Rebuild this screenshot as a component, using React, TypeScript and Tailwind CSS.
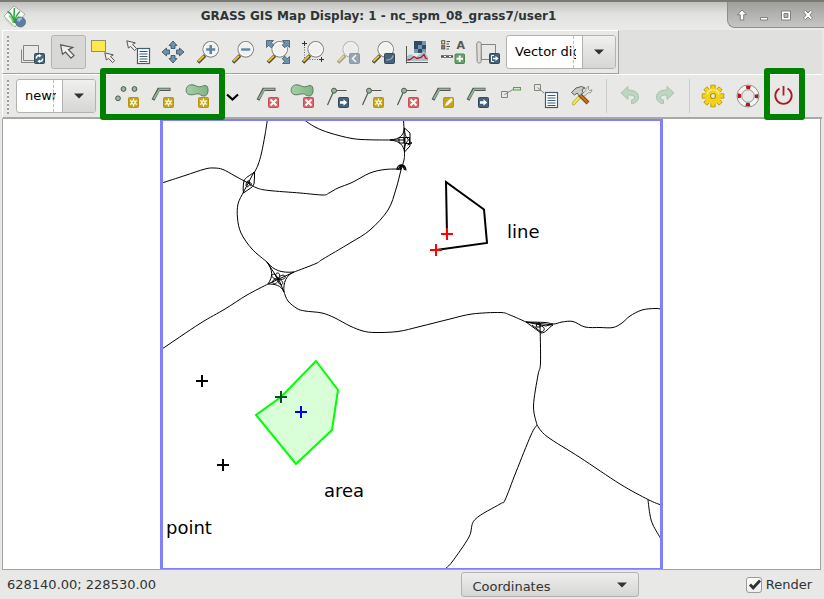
import type { ReactNode } from "react";

type Point = [number, number];

const DARK = "#555753";
const BLUE = "#3e5c72";
const GREEN = "#8fbc94";

/* ---------- icon building blocks ---------- */

function Icon({ children, className = "" }: { children: ReactNode; className?: string }) {
  return (
    <svg viewBox="0 0 24 24" className={`block size-6 shrink-0 overflow-visible ${className}`} fill="none" aria-hidden="true">
      {children}
    </svg>
  );
}

function Badge({ color, edge, children }: { color: string; edge: string; children?: ReactNode }) {
  return (
    <g>
      <rect x="13.5" y="13.5" width="10" height="10" rx="1" fill={color} stroke={edge} />
      {children}
    </g>
  );
}

const NewBadge = () => (
  <Badge color="#c8a414" edge="#ba9506">
    <path d="M18.5 14.5v8M15 16.5l7 4M22 16.5l-7 4" stroke="#fff" strokeWidth="1.3" />
    <circle cx="18.5" cy="18.5" r="2.2" fill="#fff" />
    <circle cx="18.5" cy="18.5" r="1" fill="#c8a414" />
  </Badge>
);

const DeleteBadge = () => (
  <Badge color="#dc6468" edge="#cf4a50">
    <path d="M15.5 15.5l6 6M21.5 15.5l-6 6" stroke="#fff" strokeWidth="2" />
  </Badge>
);

const MoveBadge = () => (
  <Badge color="#45637a" edge="#33495a">
    <path d="M15 17.2h3.5v-2l3.7 3.3-3.7 3.3v-2H15z" fill="#fff" />
  </Badge>
);

const EditBadge = () => (
  <Badge color="#c8a414" edge="#ba9506">
    <path d="M15 22l1-3 5-5 2 2-5 5z" fill="#fff" />
  </Badge>
);

const Handle = () => (
  <g>
    <path d="M2 22.5L9 15.5" stroke="#4d4a3c" strokeWidth="3.6" />
    <path d="M2.4 21.4L8 15.9" stroke="#f0c332" strokeWidth="1.8" />
  </g>
);

function Lens({ cx = 14.7, cy = 9.3, r = 7.8 }: { cx?: number; cy?: number; r?: number }) {
  return (
    <g>
      <Handle />
      <circle cx={cx} cy={cy} r={r} fill="#f1f1ef" stroke="#84847f" strokeWidth="1.1" />
      <circle cx={cx} cy={cy} r={r - 1.2} stroke="#fff" />
    </g>
  );
}

const PolyLine = () => (
  <g strokeLinejoin="miter">
    <path d="M3 16L8.7 5.3H20.5" stroke={DARK} strokeWidth="3.2" />
    <path d="M3.600 15L9.300 5.300H19.700" stroke={GREEN} strokeWidth="1.500" />
  </g>
);

const Blob = () => (
  <path
    d="M1.200 6.800C1 3 3.200.8 7 .8c3.200 0 4.500 2 7.500 2 2.500 0 3.500-1.300 5.500-1.300 2.500 0 3.200 2.200 3 5.500-.2 3-1.500 5-4.200 5-3 0-3.300-2.200-6-2.200-2.500 0-4 1.200-7 1-2.800-.2-4.400-1.500-4.600-4z"
    fill="url(#blobFill)"
    stroke="#5f7a62"
  />
);

const Vertex = () => (
  <g>
    <path d="M21.500 6.500H9L2.500 21" stroke={DARK} strokeWidth="1.200" />
    <circle cx="9" cy="6.700" r="2.500" fill={GREEN} stroke={DARK} />
  </g>
);

const SMALL_ARROW = "M.8.8l1.600 7.200 2.200-1.600 4 4.200 2-1.900-4-4.200 2.700-1.600z";

function Sheet({ x, y }: { x: number; y: number }) {
  return (
    <g stroke={BLUE}>
      <rect x={x} y={y} width="12" height="15" fill="#fff" strokeWidth="1.200" />
      <path d={`M${x + 2} ${y + 3}h8m-8 2.500h8m-8 2.500h8m-8 2.500h8m-8 2.500h8`} />
    </g>
  );
}

/* ---------- toolbar icons ---------- */

const icons = {
  render: (
    <Icon>
      <path d="M.5 9.500v13h13M2.500 5.500h15v15h-15z" stroke="#85857f" />
      <Badge color="#45637a" edge="#33495a">
        <path d="M15.300 18.500c0-2 1.200-3 3-3M21.700 18.500c0 2-1.200 3-3 3" stroke="#fff" strokeWidth="1.400" />
        <path d="M18 14l2.700 1.800-2.700 1.800zM19 19.400v3.600l-2.700-1.800z" fill="#fff" />
      </Badge>
    </Icon>
  ),
  pointer: (
    <Icon>
      <path d="M4.600 4.800l1.900 9.500 3-2.200 5.500 6 3-2.700-5.500-5.800 4.300-2.200z" fill="#efefed" stroke={DARK} strokeWidth="1.200" />
    </Icon>
  ),
  select: (
    <Icon>
      <rect x=".5" y=".5" width="14" height="11" fill="#fce94f" stroke="#333" strokeDasharray="1 1" />
      <g transform="translate(13 12)">
        <path d={SMALL_ARROW} fill="#efefed" stroke={DARK} />
      </g>
    </Icon>
  ),
  query: (
    <Icon>
      <path d={SMALL_ARROW} fill="#efefed" stroke={DARK} />
      <Sheet x={11.5} y={8.5} />
    </Icon>
  ),
  pan: (
    <Icon>
      <g fill="#6d93ad" stroke="#3d566a" strokeWidth=".9">
        {[0, 90, 180, 270].map((a) => (
          <path key={a} transform={`rotate(${a} 12 12)`} d="M12 1l4 4.500h-2v3h-4v-3H8z" />
        ))}
      </g>
    </Icon>
  ),
  zoomIn: (
    <Icon>
      <Lens />
      <path d="M14.700 5v9M10.200 9.500h9" stroke="#5b87a5" strokeWidth="2.600" />
    </Icon>
  ),
  zoomOut: (
    <Icon>
      <Lens />
      <path d="M10.200 9.500h9" stroke="#5b87a5" strokeWidth="2.400" />
    </Icon>
  ),
  zoomExtent: (
    <Icon>
      <Lens cx={13.7} />
      <g fill="#6d93ad" stroke="#3d566a" strokeWidth=".8">
        <path d="M.5.5h7l-2.200 2.200 2.500 2.500-2.600 2.600-2.500-2.500L.5 7.500z" />
        <path d="M23.500.5v7l-2.200-2.200-2.500 2.500-2.600-2.600 2.500-2.500L16.500.5z" />
        <path d="M23.500 23.500h-7l2.200-2.200-2.500-2.500 2.600-2.600 2.500 2.500 2.200-2.200z" />
      </g>
    </Icon>
  ),
  zoomRegion: (
    <Icon>
      <path d="M3.500 7v12.500H19" stroke="#666" strokeDasharray="1 1.500" />
      <Lens cx={14.7} />
      <path d="M3.500 1v5M1 3.500h5M20.500 17v5M18 19.500h5" stroke="#333" />
    </Icon>
  ),
  zoomBack: (
    <Icon className="opacity-50">
      <Lens />
      <Badge color="#45637a" edge="#33495a">
        <path d="M20 15l-3.500 3.500L20 22" stroke="#fff" strokeWidth="1.600" />
      </Badge>
    </Icon>
  ),
  zoomMenu: (
    <Icon>
      <Lens />
      <Badge color="#45637a" edge="#33495a">
        <path d="M22 15.500c-.5 3-3 4.500-6.500 4.500" stroke="#8fb1c6" strokeWidth="1.400" />
      </Badge>
    </Icon>
  ),
  analyze: (
    <Icon>
      <rect x="8" y="1" width="12" height="12" fill="#7596ad" />
      <path d="M12 1h4v4h-4zM16 5h4v4h-4zM8 5h4v4H8zM12 9h4v4h-4zM8 1h4v4H8z" fill="#2f4c63" />
      <path d="M1 21v-5l4-2 4 4 5-4 4-3 4 6v4z" fill="#a9c0cf" />
      <path d="M.5 6v17.500M0 22.500h22" stroke={DARK} />
      <path d="M1.500 20l3-.5 3.500-3 3 2 4-1 3-3 1.500 3.500 2 1" stroke="#b8161c" strokeWidth="1.300" />
    </Icon>
  ),
  overlay: (
    <Icon>
      <rect x=".7" y=".7" width="3" height="3.200" fill="#fce94f" stroke={DARK} />
      <rect x=".7" y="5.700" width="3" height="3.200" fill="#e06666" stroke={DARK} />
      <path d="M5.500 1.500H9M5.500 4H8M5.500 6.500H9M5.500 9H8" stroke={DARK} />
      <path d="M0 16.500h12" stroke={DARK} strokeWidth="2.500" />
      <path d="M3 16.500h2m3 0h2" stroke="#fff" />
      <text x="15.500" y="8.500" fontSize="11" fontWeight="bold" fontFamily="DejaVu Sans" fill={DARK}>
        A
      </text>
      <rect x="14" y="14" width="9.500" height="9.500" rx="1" fill="#68a06c" stroke="#4e8553" />
      <path d="M18.700 15.500v6.500M15.500 18.700H22" stroke="#fff" strokeWidth="1.900" />
    </Icon>
  ),
  save: (
    <Icon>
      <path d="M4.500 4.500h15v15h-14z" fill="#e8e8e6" stroke="#85857f" />
      <path d="M.7 3.500c0-2 4.500-2 4.500 0v18c0 2-4 2-4 0z" fill="#dcdcda" stroke="#85857f" />
      <Badge color="#45637a" edge="#33495a">
        <path d="M18 15.500h-2.500v6H18" stroke="#fff" />
        <path d="M17 17.700h2.500V16l3.200 2.500-3.200 2.500v-1.700H17z" fill="#fff" />
      </Badge>
    </Icon>
  ),
  points: (
    <Icon>
      <g fill={GREEN} stroke={DARK}>
        <circle cx="3" cy="14.300" r="2.400" />
        <circle cx="8.500" cy="5" r="2.400" />
        <circle cx="19.500" cy="5" r="2.400" />
      </g>
      <NewBadge />
    </Icon>
  ),
  line: (
    <Icon>
      <PolyLine />
      <NewBadge />
    </Icon>
  ),
  area: (
    <Icon>
      <Blob />
      <NewBadge />
    </Icon>
  ),
  more: (
    <Icon>
      <path d="M7 10.500l5.500 5 5.500-5" stroke="#000" strokeWidth="2.200" />
    </Icon>
  ),
  lineDelete: (
    <Icon>
      <PolyLine />
      <DeleteBadge />
    </Icon>
  ),
  areaDelete: (
    <Icon>
      <Blob />
      <DeleteBadge />
    </Icon>
  ),
  vertexMove: (
    <Icon>
      <Vertex />
      <MoveBadge />
    </Icon>
  ),
  vertexNew: (
    <Icon>
      <Vertex />
      <NewBadge />
    </Icon>
  ),
  vertexDelete: (
    <Icon>
      <Vertex />
      <DeleteBadge />
    </Icon>
  ),
  lineEdit: (
    <Icon>
      <PolyLine />
      <EditBadge />
    </Icon>
  ),
  lineMove: (
    <Icon>
      <PolyLine />
      <MoveBadge />
    </Icon>
  ),
  cats: (
    <Icon>
      <path d="M1.500 7.500h6v6h-6zM4.500 10.500L13 5.500" stroke="#85857f" />
      <rect x="13.500" y="3.500" width="7" height="2.500" fill="#c5f0c5" stroke="#5f9a5f" />
    </Icon>
  ),
  attributes: (
    <Icon>
      <path d="M-.5.5h6v6h-6zM2.500 3.500L9 9" stroke="#85857f" />
      <Sheet x={10.5} y={8.5} />
    </Icon>
  ),
  tools: (
    <Icon>
      <path d="M3.500 19.500L12 10.500" stroke="#a8a33a" strokeWidth="3.400" strokeLinecap="round" />
      <path d="M3.500 19.500L10 12.500" stroke="#f4ec4c" strokeWidth="2.200" strokeLinecap="round" />
      <path d="M11 11l5-4.500c-.6-2 .8-4 2.800-4L18.500 5.500l1.300 1.200 2-1c.4 2.200-1.600 3.800-3.600 3.100L13 13z" fill="#e2e2e0" stroke="#85857f" strokeWidth=".8" />
      <path d="M9.500 10.500l8.500 8.500" stroke="#7d4209" strokeWidth="4" />
      <path d="M9.500 10.500l8 8" stroke="#c8741a" strokeWidth="2.200" />
      <path d="M1.500 8.500L6 4l5.500-1.500 3.500 1.500-3 1.500 1 3-3.500 3.500-2.500-3L4.500 11z" fill="#c9c9c6" stroke="#5c5c58" />
    </Icon>
  ),
  undo: (
    <Icon>
      <path d="M3 9l7-6.500V6c6 0 10.500 2 10.500 7 0 4-3 6.500-7 6.500V16c2.500-.3 3.500-1.500 3-3-.5-1.500-3-2-6.500-1.900v4.400z" fill="#bdd5c1" stroke="#a9c4ad" />
    </Icon>
  ),
  redo: (
    <Icon>
      <path d="M21 9l-7-6.500V6C8 6 3.500 8 3.500 13c0 4 3 6.500 7 6.500V16c-2.500-.3-3.500-1.500-3-3 .5-1.500 3-2 6.500-1.900v4.400z" fill="#bdd5c1" stroke="#a9c4ad" />
    </Icon>
  ),
  settings: (
    <Icon>
      <g fill="#f3d21c" stroke="#b8960a" strokeWidth=".9">
        {[0, 45, 90, 135, 180, 225, 270, 315].map((a) => (
          <path key={a} transform={`rotate(${a} 12 12)`} d="M9.800 6V1.200h4.400V6z" />
        ))}
      </g>
      <circle cx="12" cy="12" r="8" fill="#f3d21c" />
      <path d="M6 10.500a6.200 6.200 0 0 1 12 0" stroke="#fbec78" strokeWidth="1.500" />
      <circle cx="12" cy="12" r="2.500" fill="#e8e8e6" stroke="#b8960a" strokeWidth="1.200" />
    </Icon>
  ),
  help: (
    <Icon>
      <circle cx="12" cy="12" r="8.700" stroke="#f4f4f2" strokeWidth="4.400" />
      <circle cx="12" cy="12" r="8.700" stroke="#b3141c" strokeWidth="3.400" strokeDasharray="4.200 9.466" strokeDashoffset="2.100" />
      <circle cx="12" cy="12" r="11" stroke="#8f8f8b" />
      <circle cx="12" cy="12" r="6.300" stroke="#8f8f8b" />
    </Icon>
  ),
  quit: (
    <Icon>
      <path d="M8.500 4.500a8.200 8.200 0 1 0 8 0" stroke="#a81e24" strokeWidth="1.800" />
      <path d="M12.500 2v9.500" stroke="#a81e24" strokeWidth="1.800" />
    </Icon>
  ),
};

function Tool({ icon, label, active = false, disabled = false }: { icon: keyof typeof icons; label: string; active?: boolean; disabled?: boolean }) {
  return (
    <button
      type="button"
      aria-label={label}
      aria-pressed={active || undefined}
      disabled={disabled}
      className={`flex h-[34px] w-[35px] shrink-0 items-center rounded-[3px] border pl-1 ${
        active ? "border-[#b4b4b2] bg-[#d8d8d6]" : "border-transparent"
      }`}
    >
      {icons[icon]}
    </button>
  );
}

/* ---------- shared widgets ---------- */

function Grip() {
  return (
    <div className="flex h-[42px] w-[13px] shrink-0 justify-center pt-[5px] pr-[3px]">
      <div className="h-[34px] w-[2px] bg-[repeating-linear-gradient(to_bottom,#9c9c9a_0_2px,#f2f2f0_2px_4px)]" />
    </div>
  );
}

const Caret = () => (
  <svg viewBox="0 0 10 6" className="h-[6px] w-[10px]" aria-hidden="true">
    <path d="M0 .5h10L5 5.500z" fill="#2e3436" />
  </svg>
);

function Combo({ label, value, className }: { label: string; value: string; className: string }) {
  return (
    <div className={`relative flex h-[34px] shrink-0 overflow-hidden rounded-[3px] border border-[#b2b2b0] bg-white ${className}`}>
      <select
        aria-label={label}
        className="h-full w-full appearance-none bg-transparent pr-[39px] pl-2 text-[13px] text-black outline-none"
      >
        <option>{value}</option>
      </select>
      <span className="pointer-events-none absolute inset-y-0 right-[41px] border-r border-dashed border-[#bcbcba]" />
      <span className="pointer-events-none absolute inset-y-0 right-0 flex w-[33px] items-center justify-center border-l border-[#b2b2b0] bg-linear-to-b from-[#f0f0ef] to-[#d6d6d4]">
        <Caret />
      </span>
    </div>
  );
}

const Separator = () => (
  <div className="flex w-[13px] shrink-0 justify-center">
    <div className="h-[34px] w-px bg-[#cbcbc9]" />
  </div>
);

const Highlight = ({ className }: { className: string }) => (
  <span className={`pointer-events-none absolute z-10 rounded-[3px] border-6 border-[#008000] ${className}`} />
);

/* ---------- map ---------- */

function smooth(p: Point[]) {
  let d = `M${p[0][0]} ${p[0][1]}`;
  for (let i = 0; i < p.length - 1; i++) {
    const a = p[i - 1] ?? p[i];
    const b = p[i];
    const c = p[i + 1];
    const e = p[i + 2] ?? c;
    d += `C${b[0] + (c[0] - a[0]) / 6} ${b[1] + (c[1] - a[1]) / 6} ${c[0] - (e[0] - b[0]) / 6} ${c[1] - (e[1] - b[1]) / 6} ${c[0]} ${c[1]}`;
  }
  return d;
}

const ROADS: Point[][] = [
  [[162, 183], [185, 175.5], [205, 169], [214, 168], [223, 169.5], [235, 176], [248, 183], [257, 188], [269, 190.5], [300, 193], [323, 195], [329, 193], [338, 188], [352, 182.5], [370, 173], [385, 169.5], [401, 169]],
  [[267.5, 119], [265, 135], [261.5, 153], [258, 165], [254, 173]],
  [[243, 193], [238, 204], [237.5, 218], [241, 233], [252, 249], [267, 262]],
  [[303, 119], [315, 127], [330, 133], [352, 138.5], [370, 139.8], [393, 140]],
  [[403.5, 119], [404, 130], [404.5, 152], [404, 160], [401, 170], [396, 189], [388, 210], [370, 230], [350, 243], [323, 259], [316, 263.5], [294, 272]],
  [[268, 284], [247, 295], [225, 309], [200, 323.5], [162, 349]],
  [[284, 292], [288, 301], [297, 308.5], [305, 311], [322, 313], [335, 318], [350, 326], [363, 331], [375, 332.5], [398, 331.5], [420, 326.5], [450, 319], [472, 314], [500, 312.5], [510, 315], [526, 322]],
  [[526, 322], [545, 322.5], [554, 324], [562, 322], [573, 321.5], [585, 327], [600, 327.5], [613, 327.5], [622, 323], [630, 316], [642, 310], [655, 308.5], [661, 309]],
  [[540, 323], [540.5, 363], [538, 375], [533.5, 406], [537, 425]],
  [[537, 425], [547, 436.5], [580, 457.5], [620, 484], [648, 499.5], [661, 505]],
  [[537, 425], [531, 435], [516, 472], [505, 500], [500, 504], [475, 519.5], [469, 537], [452, 562], [446, 568]],
  [[648, 500], [650, 515], [653, 525], [661, 539]],
];

function Cross({ x, y, color }: { x: number; y: number; color: string }) {
  return <path d={`M${x - 6} ${y}h12M${x} ${y - 6}v12`} stroke={color} strokeWidth="2" />;
}

function MapCanvas() {
  return (
    <svg viewBox="160 119 503 450" className="block h-[450px] w-[503px] shrink-0" fill="none" role="img" aria-label="Map">
      <defs>
        <linearGradient id="blobFill" x1="0" x2="1">
          <stop offset="0" stopColor="#a5cfa8" />
          <stop offset="1" stopColor="#83b388" />
        </linearGradient>
      </defs>
      <g stroke="#000" strokeWidth="1">
        {ROADS.map((road, i) => (
          <path key={i} d={smooth(road)} />
        ))}
        {/* interchanges */}
        <path d="M254.500 172c-5 4-9 5-10.500 9-1 4-1 8-.5 12 5-4 9-5 10.500-9 .5-4 .5-8 .5-12zM254 172L243 193M246 186c0-4 2-6 3-5 1 2 1 5-2 6M249 183c3-1 3 2 1 3" />
        <path d="M267 262c7 9 15 11 27 10-8 3-11 11-10 20-3-7-9-8-16-8 5-7 5-14-1-22zM267 262l11 17M294 272l-26 12M284 292l-5-12" />
        <path d="M278 279c-3-2-3-6-.5-6s3 3 .5 6c2-4 6-5 7-2.500s-3 3.500-7 2.500c4 1 6 4 4 5.500s-4-2-4-5.500c0 4-3 6-5 4s1-4 5-4c-4 0-7-2-6-4s5 0 6 4" />
        <path d="M404.500 128c0 8 2 9 4 12-3 3-4 6-4 12-1-7-5-11-14-12 9-1 13-4 14-12zM404.500 128l5.500 5v13l-5.500 6M390 140h15" />
        <path d="M399 137.500h5v5.500h-5zM405 137.500h4.500v6H405zM409 141.500l3 1.500-4.500 2" />
        <path d="M397 170c0-6 8-8 9 .5M398.500 170c1-5 5-5 6 0M401 165l-.5 5" strokeWidth="1.300" />
        <path d="M526 322l15 11c5 0 7-5 12-8l-27-3 20 4 7-2M537 323h3v4h-4zM540 326c5 0 6 5 1 6l-9-7" />
      </g>
      <path d="M316 361L338 390 332 430 296 464 256 415 281 397Z" fill="#d9ffd9" stroke="#00ff00" strokeWidth="2" />
      <path d="M447 234L446 182 484 209.500 487 243 436 250" stroke="#000" strokeWidth="2" />
      <Cross x={447} y={234} color="#ff0000" />
      <Cross x={436} y={250} color="#ff0000" />
      <Cross x={202} y={381} color="#000000" />
      <Cross x={223} y={465} color="#000000" />
      <Cross x={281} y={397} color="#00502d" />
      <Cross x={301} y={412} color="#0000ff" />
      <g stroke="#8080ff">
        <path d="M161.500 119V569M661.500 119V569" strokeWidth="3" />
        <path d="M160 120H663M160 569H663" strokeWidth="2" />
      </g>
      <g fill="#000" fontFamily="'DejaVu Sans', sans-serif" fontSize="18">
        <text x="507" y="238">line</text>
        <text x="324" y="497">area</text>
        <text x="166" y="534">point</text>
      </g>
    </svg>
  );
}

/* ---------- window ---------- */

const Logo = () => (
  <svg viewBox="0 0 24 24" className="block size-6" aria-hidden="true">
    <path d="M1 11L11 1l11 8-10 13z" fill="#fbfbfa" stroke="#9a9a98" strokeWidth=".8" />
    <path d="M2 13l8 8" stroke="#ccc" strokeWidth="2" />
    <g fill="none" stroke="#2ea043" strokeWidth="1.500">
      <path d="M11 18C10 12 8 8 4.500 6.500M11 18c0-5 0-11 .5-15M12 18c0-5 2-9 5-11.500" />
      <path d="M10 18c-.5-4-2-6-4-7M13 17c.5-3 2-5 3.500-5.500" stroke="#7ccf6a" />
    </g>
    <circle cx="17.500" cy="17" r="5" fill="#5b7fa3" stroke="#3c5674" strokeWidth=".6" />
    <path d="M14 15c1-2.500 4-3 5-2s-2 2-2 3-2 1-3-1z" fill="#a6bfd6" />
  </svg>
);

const WINDOW_BUTTONS: [string, ReactNode][] = [
  ["Roll up", <path d="M8 3l4.500 4.700H9.700V13H6.300V7.700H3.500z" />],
  ["Minimize", <path d="M4.500 10.500h7V13h-7z" />],
  ["Maximize", <path fillRule="evenodd" d="M3.500 4h9v9h-9zM6 6.500v4h4v-4z" />],
  ["Close", <path d="M3.500 5L5.300 3.300 8 6l2.700-2.700L12.500 5 9.800 8l2.700 3-1.800 1.700L8 10l-2.700 2.700L3.500 11l2.700-3z" />],
];

export default function App() {
  return (
    <div className="flex min-h-screen flex-col bg-[#e8e8e6] font-['DejaVu_Sans',sans-serif] text-[13px] text-[#2e3436]">
      <header className="flex h-[30px] border-t-2 border-[#7a7a72] bg-linear-to-b from-[#c0c0be] via-[#e0e0de] via-40% to-[#ebebe9]">
        <div className="w-[30px] shrink-0 pt-[3px] pl-[3px]">
          <Logo />
        </div>
        <h1 className="flex-1 truncate pt-1 text-center text-[12px] leading-5 font-bold">
          GRASS GIS Map Display: 1 - nc_spm_08_grass7/user1
        </h1>
        <div className="flex h-[26px] w-[97px] shrink-0 items-center justify-between rounded-bl-lg border-b border-l border-[#8d8d8b] bg-linear-to-b from-[#9f9f9d] to-[#c6c6c4] pr-2 pl-[6px]">
          {WINDOW_BUTTONS.map(([name, shape]) => (
            <button key={name} type="button" aria-label={name} className="size-4">
              <svg viewBox="0 0 16 16" className="block size-4" fill="#fff" stroke="#777775" strokeWidth=".9" aria-hidden="true">
                {shape}
              </svg>
            </button>
          ))}
        </div>
      </header>

      <div className="flex h-11 border-x-2 border-[#e8e8e6] bg-[#e0e0de]">
        <div role="toolbar" aria-label="Map" className="flex items-center border-t border-r border-b border-l border-t-white border-r-[#a2a2a0] border-b-[#a2a2a0] border-l-white bg-[#e8e8e6] pr-[2px]">
          <Grip />
          <Tool icon="render" label="Render map" />
          <Tool icon="pointer" label="Pointer" active />
          <Tool icon="select" label="Select features" />
          <Tool icon="query" label="Query" />
          <Tool icon="pan" label="Pan" />
          <Tool icon="zoomIn" label="Zoom in" />
          <Tool icon="zoomOut" label="Zoom out" />
          <Tool icon="zoomExtent" label="Zoom to map" />
          <Tool icon="zoomRegion" label="Zoom to region" />
          <Tool icon="zoomBack" label="Zoom back" disabled />
          <Tool icon="zoomMenu" label="Zoom options" />
          <Tool icon="analyze" label="Analyze map" />
          <Tool icon="overlay" label="Add overlay" />
          <Tool icon="save" label="Save display" />
          <Combo label="Map mode" value="Vector digitizer" className="w-[110px]" />
        </div>
      </div>

      <div role="toolbar" aria-label="Vector digitizer" className="mx-[2px] flex h-[45px] items-center border-t border-b-2 border-l border-t-white border-b-[#a8a8a6] border-l-white">
        <Grip />
        <Combo label="Vector map" value="newmap" className="w-[80px]" />
        <div className="relative ml-[14px] flex">
          <Tool icon="points" label="Digitize new point" />
          <Tool icon="line" label="Digitize new line" />
          <Tool icon="area" label="Digitize new area" />
          <Highlight className="-top-[11px] -right-[10px] -bottom-[7px] -left-[10px]" />
        </div>
        <Tool icon="more" label="More features" />
        <Tool icon="lineDelete" label="Delete line" />
        <Tool icon="areaDelete" label="Delete area" />
        <Tool icon="vertexMove" label="Move vertex" />
        <Tool icon="vertexNew" label="Add vertex" />
        <Tool icon="vertexDelete" label="Remove vertex" />
        <Tool icon="lineEdit" label="Edit line" />
        <Tool icon="lineMove" label="Move feature" />
        <Tool icon="cats" label="Display categories" />
        <Tool icon="attributes" label="Display attributes" />
        <Tool icon="tools" label="Additional tools" />
        <Separator />
        <Tool icon="undo" label="Undo" disabled />
        <Tool icon="redo" label="Redo" disabled />
        <Separator />
        <Tool icon="settings" label="Settings" />
        <Tool icon="help" label="Help" />
        <div className="relative flex">
          <Tool icon="quit" label="Quit digitizer" />
          <Highlight className="-top-[11px] -right-[4px] -bottom-[7px] -left-[2px]" />
        </div>
      </div>

      <main className="mr-[3px] ml-[2px] flex flex-1 justify-center overflow-hidden border-r border-b border-l border-[#a2a2a0] bg-white">
        <MapCanvas />
      </main>

      <footer className="grid h-[29px] grid-cols-[5fr_178px_2fr] items-center">
        <output className="pl-[7px]">628140.00; 228530.00</output>
        <div className="relative h-[25px]">
          <select
            aria-label="Status bar mode"
            className="h-full w-full appearance-none rounded-[3px] border border-[#b2b2b0] bg-linear-to-b from-[#eeeeec] to-[#d6d6d4] pt-1 pr-8 pl-[10px] text-[13px] leading-5 outline-none"
          >
            <option>Coordinates</option>
          </select>
          <span className="pointer-events-none absolute inset-y-0 right-3 flex items-center">
            <Caret />
          </span>
        </div>
        <label className="flex items-center justify-end gap-1 pr-3">
          <span className="relative flex size-4">
            <input
              type="checkbox"
              defaultChecked
              className="peer size-4 appearance-none rounded-[3px] border border-[#9a9a98] bg-linear-to-b from-white to-[#eeeeec]"
            />
            <svg viewBox="0 0 16 16" className="pointer-events-none absolute inset-0 hidden size-4 peer-checked:block" fill="none" aria-hidden="true">
              <path d="M4 7.500l3.200 3.500L14 3.500" stroke="#2e3436" strokeWidth="2.800" />
            </svg>
          </span>
          Render
        </label>
      </footer>
    </div>
  );
}
